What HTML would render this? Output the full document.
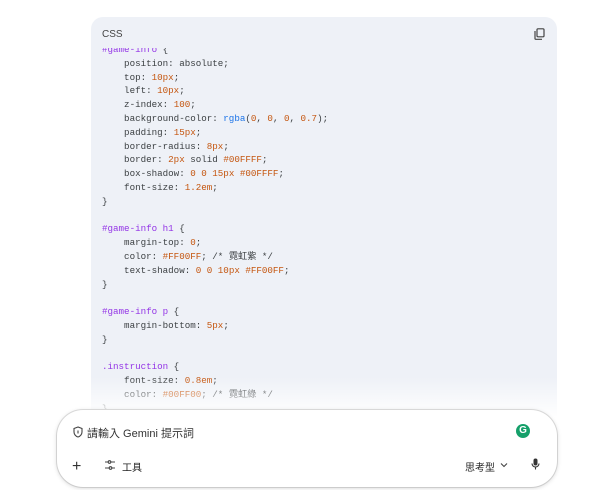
<!DOCTYPE html>
<html><head><meta charset="utf-8"><style>
body{margin:0;width:600px;height:490px;background:#fff;position:relative;overflow:hidden;font-family:"Liberation Sans","Noto Sans CJK TC",sans-serif}
.blk{position:absolute;left:91px;top:17px;width:466px;height:400px;background:#eef1f7;border-radius:12px 12px 0 0;overflow:hidden}
.hdr{position:absolute;left:11px;top:12px;font-size:10px;color:#444}
.code{position:absolute;left:11px;top:-5px;margin:0;font-family:"Liberation Mono","Noto Sans CJK TC",monospace;font-size:9.2px;line-height:13.8px;color:#3c4043;white-space:pre}
.clip{position:absolute;left:0;top:31px;right:0;bottom:0;overflow:hidden}
.k{color:#9334e6}.n{color:#c5560f}.f{color:#1a73e8}
.fade{position:absolute;left:0;right:0;top:360px;height:40px;background:linear-gradient(rgba(255,255,255,0),#fff)}
.box{position:absolute;left:57px;top:410px;width:500px;height:77px;background:#fff;border-radius:26px;box-shadow:0 1px 5px rgba(0,0,0,.18),0 0 0 1px #e3e3e3}
.ph{position:absolute;left:30px;top:15px;font-size:11px;color:#333}
.t{position:absolute;font-size:10px;color:#222}
</style></head><body>
<div class="blk">
<div class="hdr">CSS</div>
<svg style="position:absolute;left:443px;top:11px" width="11" height="12" viewBox="0 0 11 12" fill="none" stroke="#444" stroke-width="1.2"><rect x="3" y="0.8" width="7" height="8" rx="1"/><path d="M1 3v7.5a.8.8 0 0 0 .8.8H8"/></svg>
<div class="clip"><pre class="code"><span class="k">#game-info</span> {
    position: absolute;
    top: <span class="n">10px</span>;
    left: <span class="n">10px</span>;
    z-index: <span class="n">100</span>;
    background-color: <span class="f">rgba</span>(<span class="n">0</span>, <span class="n">0</span>, <span class="n">0</span>, <span class="n">0.7</span>);
    padding: <span class="n">15px</span>;
    border-radius: <span class="n">8px</span>;
    border: <span class="n">2px</span> solid <span class="n">#00FFFF</span>;
    box-shadow: <span class="n">0 0 15px #00FFFF</span>;
    font-size: <span class="n">1.2em</span>;
}

<span class="k">#game-info h1</span> {
    margin-top: <span class="n">0</span>;
    color: <span class="n">#FF00FF</span>; /* 霓虹紫 */
    text-shadow: <span class="n">0 0 10px #FF00FF</span>;
}

<span class="k">#game-info p</span> {
    margin-bottom: <span class="n">5px</span>;
}

<span class="k">.instruction</span> {
    font-size: <span class="n">0.8em</span>;
    color: <span class="n">#00FF00</span>; /* 霓虹綠 */
}</pre></div>
<div class="fade"></div>
</div>
<div class="box">
<svg style="position:absolute;left:16px;top:16px" width="10" height="12" viewBox="0 0 10 12" fill="none" stroke="#444" stroke-width="1.1"><path d="M5 1L1 2.5v3.5c0 2.5 2 4.5 4 5 2-.5 4-2.5 4-5V2.5z"/><path d="M5 4.5v3"/></svg>
<div class="ph">請輸入 Gemini 提示詞</div>
<div style="position:absolute;left:459px;top:14px;width:14px;height:14px;border-radius:50%;background:#15a06a;color:#fff;font-size:10px;font-weight:bold;text-align:center;line-height:14px">G</div>
<div class="t" style="left:15px;top:49px;font-size:16px;line-height:16px;color:#333">+</div>
<svg style="position:absolute;left:47px;top:50px" width="12" height="10" viewBox="0 0 12 10" fill="none" stroke="#444" stroke-width="1.1"><path d="M1 2h3M7 2h4M1 8h4M8 8h3"/><circle cx="5.5" cy="2" r="1.3"/><circle cx="6.5" cy="8" r="1.3"/></svg>
<div class="t" style="left:65px;top:49px">工具</div>
<div class="t" style="left:408px;top:49px">思考型</div>
<svg style="position:absolute;left:443px;top:52px" width="8" height="6" viewBox="0 0 8 6" fill="none" stroke="#444" stroke-width="1.1"><path d="M1 1.5l3 3 3-3"/></svg>
<svg style="position:absolute;left:474px;top:48px" width="9" height="12" viewBox="0 0 9 12"><rect x="2.5" y="0.5" width="4" height="7" rx="2" fill="#333"/><path d="M1 5.5a3.5 3.5 0 0 0 7 0M4.5 9v2.5" stroke="#333" stroke-width="1.1" fill="none"/></svg>
</div>
</body></html>
